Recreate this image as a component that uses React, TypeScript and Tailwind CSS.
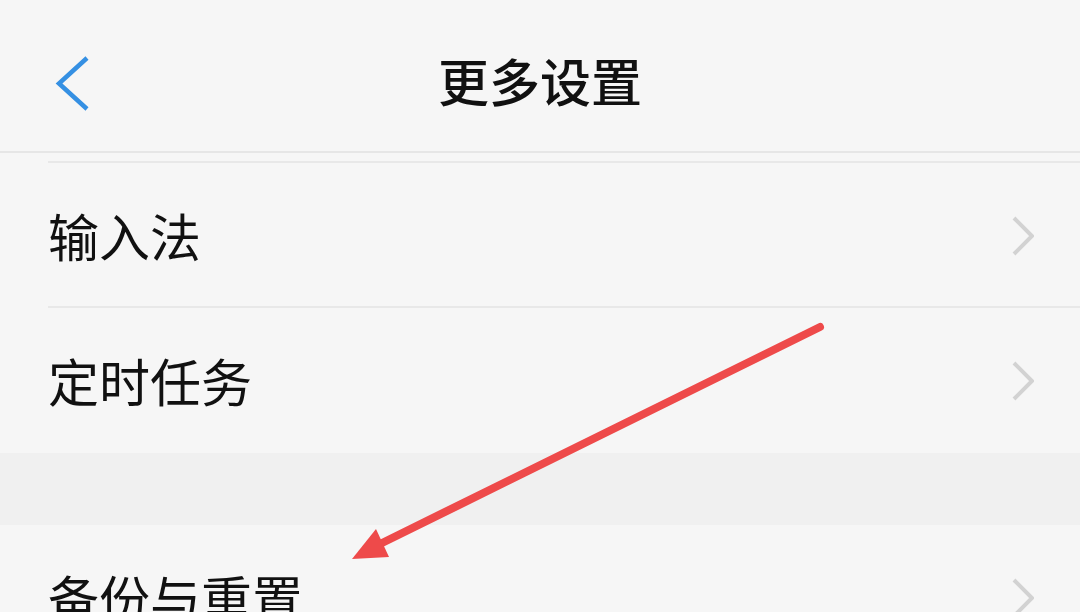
import React from 'react'

const font = { fontFamily: '"Noto Sans CJK SC", "Noto Sans", sans-serif' }

function Chevron() {
  return (
    <svg width="28" height="44" viewBox="0 0 28 44" className="shrink-0">
      <path d="M8 4 L26 22 L8 40" fill="none" stroke="#d2d2d2" strokeWidth="4" />
    </svg>
  )
}

function Row({ label, divider }: { label: string; divider?: boolean }) {
  return (
    <div className="relative flex h-[145px] items-center justify-between pl-[48px] pr-[46px]">
      <span className="text-[51px] leading-none text-[#111111]">{label}</span>
      <Chevron />
      {divider && <div className="absolute bottom-0 left-[48px] right-0 h-[2px] bg-[#e8e8e8]" />}
    </div>
  )
}

export default function App() {
  return (
    <div className="relative h-[612px] w-[1080px] overflow-hidden bg-[#f6f6f6]" style={font}>
      {/* header */}
      <div className="relative flex h-[153px] items-center justify-center border-b-2 border-[#e6e6e6] pt-[9px]">
        <svg width="40" height="60" viewBox="0 0 40 60" className="absolute left-[54px] top-[55px]">
          <path d="M33 3 L5 28.5 L33 54" fill="none" stroke="#3590e3" strokeWidth="4.5" />
        </svg>
        <span className="text-[51px] font-medium leading-none text-[#111111]">更多设置</span>
      </div>

      {/* scrolled list */}
      <div className="ml-[48px] h-[10px] border-b-2 border-[#e8e8e8]" />
      <Row label="输入法" divider />
      <Row label="定时任务" />
      <div className="h-[72px] bg-[#f0f0f0]" />
      <Row label="备份与重置" />

      {/* annotation arrow */}
      <svg className="pointer-events-none absolute left-0 top-0" width="1080" height="612" viewBox="0 0 1080 612">
        <line x1="820" y1="327" x2="378" y2="545" stroke="#ee4a4a" strokeWidth="8" strokeLinecap="round" />
        <polygon points="352,559 376,529 389,557" fill="#ee4a4a" />
      </svg>
    </div>
  )
}
